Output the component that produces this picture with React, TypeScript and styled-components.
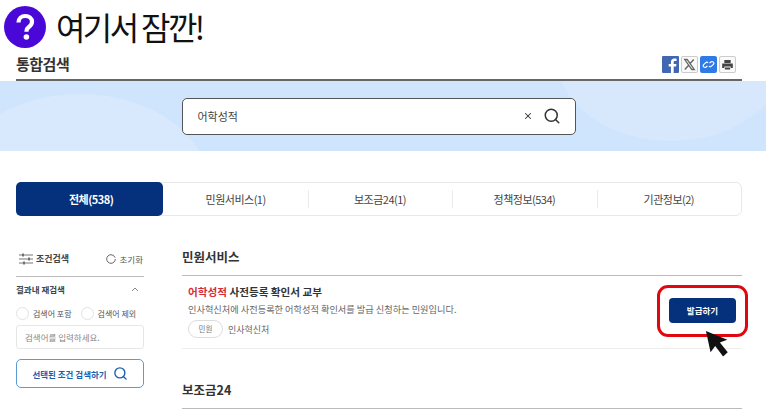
import React from "react";
import styled, { createGlobalStyle } from "styled-components";
import { Search, X } from "lucide-react";

const tabs = ["전체(538)", "민원서비스(1)", "보조금24(1)", "정책정보(534)", "기관정보(2)"];

const App = () => (
  <Page>
    <GlobalStyle />
    <Notice>
      <svg width="42" height="42" viewBox="0 0 42 42">
        <circle cx="21" cy="21" r="21" fill="#4a08d8" />
        <path d="M14.5 16.5c0-4 3-6.5 6.8-6.5s6.7 2.4 6.7 5.8c0 2.8-1.6 4.2-3.4 5.5-1.5 1.1-2.1 1.9-2.1 3.7v.8" fill="none" stroke="#fff" strokeWidth="4.2" />
        <circle cx="22.4" cy="31" r="2.8" fill="#fff" />
      </svg>
      <NoticeText>여기서 잠깐!</NoticeText>
    </Notice>
    <TitleRow>
      <PageTitle>통합검색</PageTitle>
      <ShareIcons>
        <svg width="17" height="17" viewBox="0 0 16 17" preserveAspectRatio="none">
          <rect width="16" height="17" rx="1" fill="#4267b2" />
          <path d="M11 17v-6.500h2.200l.4-2.600H11V6.300c0-.8.3-1.300 1.400-1.300h1.300V2.700C13.300 2.600 12.600 2.500 11.800 2.500 9.800 2.500 8.400 3.700 8.400 6v1.900H6.300v2.600h2.100V17z" fill="#fff" />
        </svg>
        <svg width="17" height="17" viewBox="0 0 16 17" preserveAspectRatio="none">
          <rect x=".5" y=".5" width="15" height="16" rx="1.500" fill="#fafafa" stroke="#ccc" />
          <path d="M3.500 3.500h2.300l6.700 10h-2.300zM12 3.500l-3.400 4M7 9.500l-3.400 4" fill="none" stroke="#666" strokeWidth="1.300" />
        </svg>
        <svg width="17" height="17" viewBox="0 0 16 17" preserveAspectRatio="none">
          <rect width="16" height="17" rx="2" fill="#2f7be6" />
          <path d="M7 9.800l-1.200 1.200a1.700 1.700 0 01-2.400-2.400l1.800-1.800a1.700 1.700 0 012.400 0M9 7.200l1.200-1.200a1.700 1.700 0 012.400 2.400l-1.800 1.800a1.700 1.700 0 01-2.400 0" fill="none" stroke="#fff" strokeWidth="1.100" />
        </svg>
        <svg width="17" height="17" viewBox="0 0 16 17" preserveAspectRatio="none">
          <rect x=".5" y=".5" width="15" height="16" rx="1.500" fill="#fafafa" stroke="#ccc" />
          <path d="M5 4h6v3H5zM3 7.500h10v4.500h-2v-1.500H5V12H3zM5.500 11.500h5v2h-5z" fill="#444" />
        </svg>
      </ShareIcons>
    </TitleRow>
    <Hero>
      <HeroShape />
      <HeroShapeRight />
      <SearchBox>
        <SearchValue>어학성적</SearchValue>
        <X size={10} color="#333" strokeWidth={2.500} />
        <Search size={18} color="#333" strokeWidth={2} />
      </SearchBox>
    </Hero>
    <Tabs>
      {tabs.map((tab, i) => (
        <Tab key={tab} $active={i === 0} $divided={i > 1}>
          {tab}
        </Tab>
      ))}
    </Tabs>
    <Content>
      <Sidebar>
        <FilterHead>
          <FilterTitle>
            <svg width="14" height="12" viewBox="0 0 14 12">
              <path d="M0 2h14M0 6h14M0 10h14" stroke="#777" strokeWidth="1" />
              <path d="M4 .5v3M10 4.500v3M5 8.500v3" stroke="#555" strokeWidth="1.500" />
            </svg>
            조건검색
          </FilterTitle>
          <Reset>
            <svg width="10" height="10" viewBox="0 0 10 10">
              <circle cx="5" cy="5" r="4.300" fill="none" stroke="#666" strokeWidth="1" strokeDasharray="25 2" />
            </svg>
            초기화
          </Reset>
        </FilterHead>
        <RefineHead>
          결과내 재검색
          <svg width="8" height="5" viewBox="0 0 8 5">
            <path d="M1 4l3-3 3 3" fill="none" stroke="#888" />
          </svg>
        </RefineHead>
        <RadioRow>
          <RadioLabel>
            <RadioDot />
            검색어 포함
          </RadioLabel>
          <RadioLabel>
            <RadioDot />
            검색어 제외
          </RadioLabel>
        </RadioRow>
        <RefineInput>검색어를 입력하세요.</RefineInput>
        <FilterButton>
          선택된 조건 검색하기
          <Search size={15} color="#1d5fae" strokeWidth={2.200} />
        </FilterButton>
      </Sidebar>
      <Results>
        <SectionTitle>민원서비스</SectionTitle>
        <ResultRow>
          <ResultBody>
            <ResultTitle>
              <em>어학성적</em> 사전등록 확인서 교부
            </ResultTitle>
            <ResultDesc>인사혁신처에 사전등록한 어학성적 확인서를 발급 신청하는 민원입니다.</ResultDesc>
            <ResultMeta>
              <Pill>민원</Pill>
              인사혁신처
            </ResultMeta>
          </ResultBody>
          <IssueWrap>
            <IssueButton>발급하기</IssueButton>
            <Cursor width="26" height="29" viewBox="0 0 28 30" preserveAspectRatio="none">
              <path d="M1 1l5 22 5-6.500 8.500 11 5-4.500-8.500-10 8-3z" fill="#111" />
            </Cursor>
          </IssueWrap>
        </ResultRow>
        <NextSection>보조금24</NextSection>
      </Results>
    </Content>
  </Page>
);

export default App;

const GlobalStyle = createGlobalStyle`
  html, body {
    margin: 0;
    background: #fff;
    overflow: hidden;
  }
  body {
    font-family: "Noto Sans CJK KR", "Noto Sans", sans-serif;
    color: #222;
  }
`;

const Page = styled.div`
  width: 766px;
  height: 417px;
  overflow: hidden;
`;

const Notice = styled.div`
  display: flex;
  align-items: center;
  gap: 10px;
  height: 41px;
  padding: 6px 0 0 4px;
`;

const NoticeText = styled.div`
  font-size: 32px;
  line-height: 41px;
  letter-spacing: -2.600px;
  word-spacing: 0;
  color: #111;
`;

const TitleRow = styled.div`
  display: flex;
  justify-content: space-between;
  align-items: flex-end;
  box-sizing: border-box;
  height: 34px;
  margin: 0 24px 0 16px;
  padding: 0 6px 6px 0;
  border-bottom: 2px solid #666;
`;

const PageTitle = styled.h1`
  margin: 0 0 -1px;
  font-size: 15px;
  line-height: 20px;
  font-weight: 700;
  color: #333;
  letter-spacing: -0.5px;
`;

const ShareIcons = styled.div`
  display: flex;
  gap: 2px;
  svg {
    display: block;
  }
`;

const Hero = styled.div`
  position: relative;
  display: flex;
  justify-content: center;
  height: 70px;
  background: #cfe5fd;
  overflow: hidden;
`;

const HeroShape = styled.div`
  position: absolute;
  left: -50px;
  top: 13px;
  width: 260px;
  height: 190px;
  border-radius: 50%;
  background: #d9e9fd;
`;

const HeroShapeRight = styled.div`
  position: absolute;
  right: -20px;
  top: -110px;
  width: 230px;
  height: 170px;
  border-radius: 50%;
  background: #d7e8fd;
`;

const SearchBox = styled.div`
  position: relative;
  box-sizing: border-box;
  display: flex;
  align-items: center;
  gap: 10px;
  width: 394px;
  height: 37px;
  margin: 17px 0 0 -9px;
  padding: 0 14px 2px 15px;
  background: #fff;
  border: 1.500px solid #555;
  border-radius: 5px;
`;

const SearchValue = styled.div`
  flex: 1;
  font-size: 11px;
  color: #444;
`;

const Tabs = styled.div`
  display: flex;
  box-sizing: border-box;
  height: 34px;
  margin: 31px 24px 0 16px;
  border: 1px solid #e8e8e8;
  border-radius: 6px;
`;

const Tab = styled.div<{ $active: boolean; $divided: boolean }>`
  flex: 1;
  display: flex;
  align-items: center;
  justify-content: center;
  margin: ${({ $active }) => ($active ? "-1px 0 -1px -1px" : "0")};
  padding-left: ${({ $active }) => ($active ? "3px" : "0")};
  font-size: 11px;
  letter-spacing: -0.500px;
  font-weight: ${({ $active }) => ($active ? 700 : 400)};
  color: ${({ $active }) => ($active ? "#fff" : "#444")};
  background: ${({ $active }) => ($active ? "#05307c" : "transparent")};
  border-radius: ${({ $active }) => ($active ? "5px" : "0")};
  position: relative;
  &::before {
    content: "";
    display: ${({ $divided }) => ($divided ? "block" : "none")};
    position: absolute;
    left: 0;
    top: 7px;
    bottom: 7px;
    width: 1px;
    background: #eaeaea;
  }
`;

const Content = styled.div`
  display: flex;
  gap: 38px;
  margin: 0 24px 0 16px;
`;

const Sidebar = styled.aside`
  width: 128px;
  flex: none;
  padding-top: 33px;
`;

const FilterHead = styled.div`
  display: flex;
  justify-content: space-between;
  align-items: center;
  height: 19px;
  padding: 0 1px 8px 3px;
  border-bottom: 1px solid #bbb;
`;

const FilterTitle = styled.div`
  display: flex;
  align-items: center;
  gap: 3px;
  font-size: 9px;
  font-weight: 700;
  color: #444;
`;

const Reset = styled.div`
  display: flex;
  align-items: center;
  gap: 4px;
  font-size: 8.500px;
  color: #555;
`;

const RefineHead = styled.div`
  display: flex;
  justify-content: space-between;
  align-items: center;
  margin-top: 5px;
  padding-right: 5px;
  height: 14px;
  font-size: 8.500px;
  font-weight: 700;
  color: #444;
`;

const RadioRow = styled.div`
  display: flex;
  gap: 9px;
  margin-top: 11px;
`;

const RadioLabel = styled.div`
  display: flex;
  align-items: center;
  gap: 4px;
  font-size: 8px;
  color: #555;
  white-space: nowrap;
`;

const RadioDot = styled.span`
  box-sizing: border-box;
  width: 13px;
  height: 13px;
  border: 1px solid #e2e2e2;
  border-radius: 50%;
`;

const RefineInput = styled.div`
  box-sizing: border-box;
  height: 24px;
  margin-top: 5px;
  padding-left: 8px;
  border: 1px solid #e6e6e6;
  border-radius: 3px;
  font-size: 8.500px;
  line-height: 22px;
  color: #888;
`;

const FilterButton = styled.div`
  box-sizing: border-box;
  display: flex;
  align-items: center;
  justify-content: center;
  gap: 6px;
  height: 29px;
  margin-top: 10px;
  border: 1px solid #5b9bd8;
  border-radius: 5px;
  font-size: 8.500px;
  font-weight: 700;
  color: #1d5fae;
`;

const Results = styled.main`
  flex: 1;
  min-width: 0;
  padding-top: 27px;
`;

const SectionTitle = styled.h2`
  box-sizing: border-box;
  height: 33px;
  margin: 0;
  padding-top: 5px;
  border-bottom: 1px solid #bbb;
  font-size: 12.500px;
  line-height: 18px;
  font-weight: 700;
  color: #333;
`;

const NextSection = styled(SectionTitle)`
  margin-top: 27px;
  height: 33px;
`;

const ResultRow = styled.div`
  display: flex;
  justify-content: space-between;
  box-sizing: border-box;
  height: 73px;
  padding: 8px 0 0 6px;
  border-bottom: 1px solid #eee;
`;

const ResultBody = styled.div`
  display: flex;
  flex-direction: column;
`;

const ResultTitle = styled.div`
  font-size: 10.600px;
  line-height: 16px;
  font-weight: 700;
  color: #333;
  em {
    font-style: normal;
    color: #d92b35;
  }
`;

const ResultDesc = styled.div`
  margin-top: 2px;
  font-size: 9.200px;
  line-height: 14px;
  color: #666;
`;

const ResultMeta = styled.div`
  display: flex;
  align-items: center;
  gap: 5px;
  margin-top: 4px;
  font-size: 9px;
  color: #666;
`;

const Pill = styled.span`
  box-sizing: border-box;
  width: 35px;
  height: 18px;
  border: 1px solid #ddd;
  border-radius: 9px;
  text-align: center;
  font-size: 7.500px;
  line-height: 16px;
  color: #777;
`;

const IssueWrap = styled.div`
  position: relative;
  margin: 14px 6px 0 0;
`;

const IssueButton = styled.div`
  position: relative;
  width: 67px;
  height: 25px;
  border-radius: 4px;
  background: #05307c;
  color: #fff;
  font-size: 8.500px;
  font-weight: 700;
  line-height: 25px;
  text-align: center;
  &::after {
    content: "";
    position: absolute;
    inset: -13px -12px -14px -12px;
    border: 3px solid #e2060f;
    border-radius: 11px;
  }
`;

const Cursor = styled.svg`
  position: absolute;
  left: 36px;
  top: 32px;
`;
